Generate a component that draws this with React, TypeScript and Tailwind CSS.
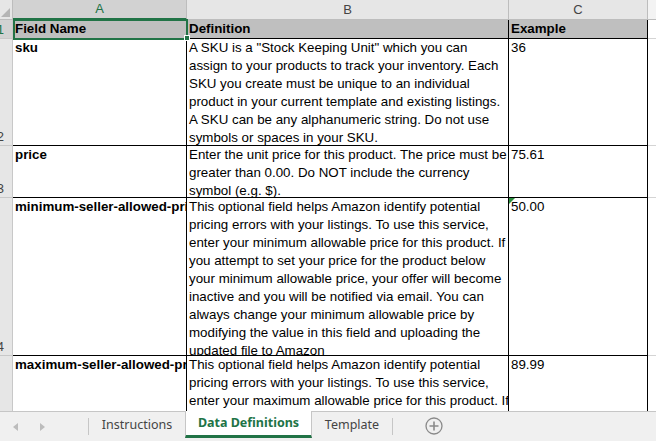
import React from 'react';

const ROWS = [
  {
    num: '2',
    h: 'h-[107px]',
    field: 'sku',
    def: [
      'A SKU is a "Stock Keeping Unit" which you can',
      'assign to your products to track your inventory. Each',
      'SKU you create must be unique to an individual',
      'product in your current template and existing listings.',
      'A SKU can be any alphanumeric string. Do not use',
      'symbols or spaces in your SKU.',
    ],
    example: '36',
  },
  {
    num: '3',
    h: 'h-[52px]',
    field: 'price',
    def: [
      'Enter the unit price for this product. The price must be',
      'greater than 0.00. Do NOT include the currency',
      'symbol (e.g. $).',
    ],
    example: '75.61',
  },
  {
    num: '4',
    h: 'h-[158px]',
    field: 'minimum-seller-allowed-price',
    def: [
      'This optional field helps Amazon identify potential',
      'pricing errors with your listings. To use this service,',
      'enter your minimum allowable price for this product. If',
      'you attempt to set your price for the product below',
      'your minimum allowable price, your offer will become',
      'inactive and you will be notified via email. You can',
      'always change your minimum allowable price by',
      'modifying the value in this field and uploading the',
      'updated file to Amazon',
    ],
    example: '50.00',
    flag: true,
  },
  {
    num: '5',
    h: 'h-[55px]',
    field: 'maximum-seller-allowed-price',
    def: [
      'This optional field helps Amazon identify potential',
      'pricing errors with your listings. To use this service,',
      'enter your maximum allowable price for this product. If',
      'you attempt to set your price for the product above',
    ],
    example: '89.99',
    open: true,
  },
];

function RowHeader({ num }: { num: string }) {
  return (
    <div className="relative w-[13px] shrink-0 overflow-hidden border-r border-b border-[#c8c8c8] bg-[#e6e6e6]">
      <span className="absolute right-[8px] bottom-[-1px] text-[13px] leading-[18px] text-[#444]">{num}</span>
    </div>
  );
}

export default function App() {
  return (
    <div className="relative flex h-[441px] w-[656px] flex-col overflow-hidden bg-white font-['Liberation_Sans',Arial,sans-serif] text-[13.33px] text-black">
      {/* column headers */}
      <div className="flex h-[20px] shrink-0 bg-[#e6e6e6] text-[13px] text-[#444]">
        <div className="relative w-[13px] shrink-0 border-r border-b border-[#bdbdbd]">
          <div className="absolute right-[2px] bottom-[2px] h-0 w-0 border-b-[9px] border-l-[9px] border-b-[#b5b5b5] border-l-transparent" />
        </div>
        <div className="flex w-[174px] shrink-0 items-center justify-center border-r border-b-2 border-r-[#bdbdbd] border-b-[#217346] bg-[#d2d2d2] text-[#217346]">A</div>
        <div className="flex w-[322px] shrink-0 items-center justify-center border-r border-b border-[#bdbdbd]">B</div>
        <div className="flex w-[139px] shrink-0 items-center justify-center border-r border-b border-[#bdbdbd]">C</div>
        <div className="flex-1 border-b border-[#bdbdbd] bg-[#f3f3f3]" />
      </div>

      {/* header row */}
      <div className="flex h-[19px] shrink-0">
        <div className="relative w-[13px] shrink-0 overflow-hidden border-r border-b border-[#c8c8c8] bg-[#d2d2d2]">
          <span className="absolute right-[8px] bottom-[-1px] text-[13px] leading-[18px] text-[#217346]">1</span>
        </div>
        <div className="w-[174px] shrink-0 border-r border-b border-black bg-[#bfbfbf] pl-[2px] font-bold leading-[18px]">Field Name</div>
        <div className="w-[322px] shrink-0 border-r border-b border-black bg-[#bfbfbf] pl-[2px] font-bold leading-[18px]">Definition</div>
        <div className="w-[139px] shrink-0 border-r border-b border-black bg-[#bfbfbf] pl-[2px] font-bold leading-[18px]">Example</div>
        <div className="flex-1 border-b border-[#d4d4d4]" />
      </div>

      {ROWS.map((r) => (
        <div key={r.num} className={`flex shrink-0 overflow-hidden ${r.h}`}>
          {r.open ? (
            <div className="w-[13px] shrink-0 border-r border-[#c8c8c8] bg-[#e6e6e6]" />
          ) : (
            <RowHeader num={r.num} />
          )}
          <div className={`w-[174px] shrink-0 overflow-hidden whitespace-nowrap border-r border-black pl-[2px] font-bold leading-[18px] ${r.open ? '' : 'border-b'}`}>
            {r.field}
          </div>
          <div className={`w-[322px] shrink-0 overflow-hidden whitespace-nowrap border-r border-black pl-[2px] leading-[18px] ${r.open ? '' : 'border-b'}`}>
            {r.def.map((l, i) => (
              <div key={i}>{l}</div>
            ))}
          </div>
          <div className={`relative w-[139px] shrink-0 border-r border-black pl-[2px] leading-[18px] ${r.open ? '' : 'border-b'}`}>
            {r.flag && (
              <div className="absolute top-0 left-0 h-0 w-0 border-t-[6px] border-r-[6px] border-t-[#2a8f3f] border-r-transparent" />
            )}
            {r.example}
          </div>
          <div className={`flex-1 border-[#d4d4d4] ${r.open ? '' : 'border-b'}`} />
        </div>
      ))}

      {/* sheet tabs */}
      <div className="flex min-h-0 flex-1 items-stretch border-t border-[#c6c6c6] bg-[#f0f0f0] font-['Noto_Sans',sans-serif] text-[12.5px] text-[#444]">
        <div className="flex w-[88px] shrink-0 items-center gap-[22px] pl-[13px]">
          <span className="h-0 w-0 border-y-[4px] border-r-[5px] border-y-transparent border-r-[#bcbcbc]" />
          <span className="h-0 w-0 border-y-[4px] border-l-[5px] border-y-transparent border-l-[#bcbcbc]" />
        </div>
        <div className="my-[6px] w-px bg-[#c6c6c6]" />
        <div className="flex w-[96px] items-center justify-center pb-[2px]">Instructions</div>
        <div className="-mt-px mb-[3px] flex w-[127px] items-center justify-center border-x border-[#c6c6c6] border-b-[3px] border-b-[#217346] bg-white font-bold text-[#217346]">
          Data Definitions
        </div>
        <div className="flex w-[80px] items-center justify-center pb-[2px]">Template</div>
        <div className="my-[6px] w-px bg-[#c6c6c6]" />
        <div className="flex w-[82px] items-center justify-center pb-[2px]">
          <svg width="18" height="18" viewBox="0 0 18 18">
            <circle cx="9" cy="9" r="8" fill="none" stroke="#8a8a8a" strokeWidth="1.3" />
            <path d="M9 4.5v9M4.5 9h9" stroke="#8a8a8a" strokeWidth="1.6" />
          </svg>
        </div>
      </div>

      {/* selection on A1 */}
      <div className="pointer-events-none absolute top-[19px] left-[13px] h-[21px] w-[175px] border-2 border-[#217346]" />
      <div className="pointer-events-none absolute top-[35px] left-[184px] h-[6px] w-[6px] border border-white bg-[#217346]" />
    </div>
  );
}
